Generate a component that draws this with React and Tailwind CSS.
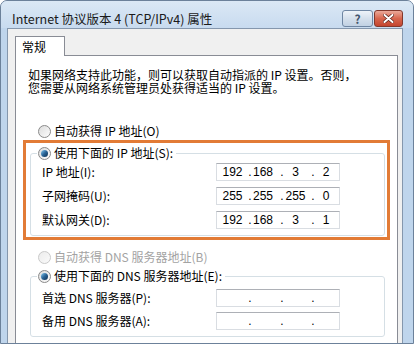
import React from 'react';

function Radio({ checked, disabled }) {
  return (
    <span
      className={
        disabled
          ? 'flex h-[13px] w-[13px] shrink-0 items-center justify-center rounded-full border border-[#c9c9c9] bg-gradient-to-br from-[#ececec] to-[#fafafa]'
          : 'flex h-[13px] w-[13px] shrink-0 items-center justify-center rounded-full border border-[#8a8a8a] bg-gradient-to-br from-[#dcdcdc] to-[#fdfdfd]'
      }
    >
      {checked && <span className="h-[7px] w-[7px] rounded-full bg-gradient-to-br from-[#86cdf3] via-[#2a6496] to-[#10304f]" />}
    </span>
  );
}

function IpBox({ parts = ['', '', '', ''] }) {
  const [a, b, c, d] = parts;
  return (
    <div className="flex h-[18px] w-[124px] shrink-0 items-center border border-[#d9dde2] border-t-[#adb0b6] bg-white font-['Liberation_Sans',sans-serif] text-[12px] leading-none text-black">
      <span className="w-[31px] text-center">{a}</span>
      <span className="w-[4px] text-center">.</span>
      <span className="w-[28px] pl-px">{b}</span>
      <span className="w-[4px] text-center">.</span>
      <span className="w-[27px] pr-[4px] text-center">{c}</span>
      <span className="w-[4px] text-center">.</span>
      <span className="w-[22px] text-center">{d}</span>
    </div>
  );
}

function Row({ label, parts }) {
  return (
    <div className="flex items-center pl-[11px]">
      <span className="w-[174px] whitespace-nowrap">{label}</span>
      <IpBox parts={parts} />
    </div>
  );
}

function Legend({ children }) {
  return (
    <legend className="ml-[6px] px-px">
      <span className="flex h-[16px] items-center gap-[3px] pr-[2px] leading-[16px]">
        <Radio checked />
        <span className="whitespace-nowrap">{children}</span>
      </span>
    </legend>
  );
}

export default function App() {
  return (
    <div className="h-[344px] w-[414px] overflow-hidden rounded-t-[7px] border border-[#6c819a] bg-[#bfd5ec] font-['Noto_Sans_CJK_SC',sans-serif] text-[12px] text-black">
      {/* title bar */}
      <div className="flex h-[27px] items-start bg-gradient-to-b from-[#dbe8f5] to-[#c8dbef] pl-[11px] pr-[10px]">
        <span className="mt-[10px] whitespace-nowrap text-[12.5px] leading-[16px] text-[#1a1a1a]">Internet 协议版本 4 (TCP/IPv4) 属性</span>
        <div className="ml-auto mt-[9px] flex gap-px">
          <div className="flex h-[17px] w-[31px] items-center justify-center rounded-[3px] border border-[#6f86a3] bg-gradient-to-b from-[#eef3f9] via-[#d5e0ec] to-[#c1d1e3] text-[12px] font-bold leading-none text-[#44566e]">
            ?
          </div>
          <div className="flex h-[17px] w-[29px] items-center justify-center rounded-[3px] border border-[#83382c] bg-gradient-to-b from-[#eaa99a] via-[#d7664e] to-[#c4452f]">
            <svg width="11" height="9" viewBox="0 0 11 9">
              <path d="M1.5 1 L9.5 8 M9.5 1 L1.5 8" stroke="#5a2119" strokeWidth="3.4" strokeLinecap="round" />
              <path d="M1.5 1 L9.5 8 M9.5 1 L1.5 8" stroke="#ffffff" strokeWidth="2" strokeLinecap="round" />
            </svg>
          </div>
        </div>
      </div>

      {/* client area */}
      <div className="ml-[6px] h-[320px] w-[396px] border border-[#8597ad] bg-[#f0f0f0] pl-[7px] pt-[7px]">
        <div className="relative z-10 h-[20px] w-[50px] border-x border-t border-[#898c95] bg-white pl-[6px] pt-[3px] leading-[13px]">
          常规
        </div>
        <div className="-mt-px flex h-[296px] w-[383px] flex-col border border-[#898c95] bg-white">
          <div className="ml-[12px] mt-[12px] flex flex-col whitespace-nowrap">
            <span className="h-[13px] leading-[13px]">如果网络支持此功能，则可以获取自动指派的 IP 设置。否则，</span>
            <span className="h-[13px] leading-[13px]">您需要从网络系统管理员处获得适当的 IP 设置。</span>
          </div>

          <div className="ml-[22px] mt-[29px] flex h-[16px] items-center gap-[3px]">
            <Radio />
            <span>自动获得 IP 地址(O)</span>
          </div>

          <div className="ml-[7px] mt-px w-[367px] border-[3px] border-[#e27b36] pb-px pt-[2px]">
            <fieldset className="ml-[4px] w-[355px] rounded-[3px] border border-[#d5dfe5] pb-[6px]">
              <Legend>使用下面的 IP 地址(S):</Legend>
              <div className="mt-[2px] flex flex-col gap-[6px]">
                <Row label="IP 地址(I):" parts={['192', '168', '3', '2']} />
                <Row label="子网掩码(U):" parts={['255', '255', '255', '0']} />
                <Row label="默认网关(D):" parts={['192', '168', '3', '1']} />
              </div>
            </fieldset>
          </div>

          <div className="ml-[22px] mt-[9px] flex h-[16px] items-center gap-[3px] text-[#a3a3a3]">
            <Radio disabled />
            <span>自动获得 DNS 服务器地址(B)</span>
          </div>

          <fieldset className="ml-[14px] mt-[3px] w-[355px] rounded-[3px] border border-[#d5dfe5] pb-[6px]">
            <Legend>使用下面的 DNS 服务器地址(E):</Legend>
            <div className="mt-[5px] flex flex-col gap-[5px]">
              <Row label="首选 DNS 服务器(P):" />
              <Row label="备用 DNS 服务器(A):" />
            </div>
          </fieldset>
        </div>
      </div>
    </div>
  );
}
